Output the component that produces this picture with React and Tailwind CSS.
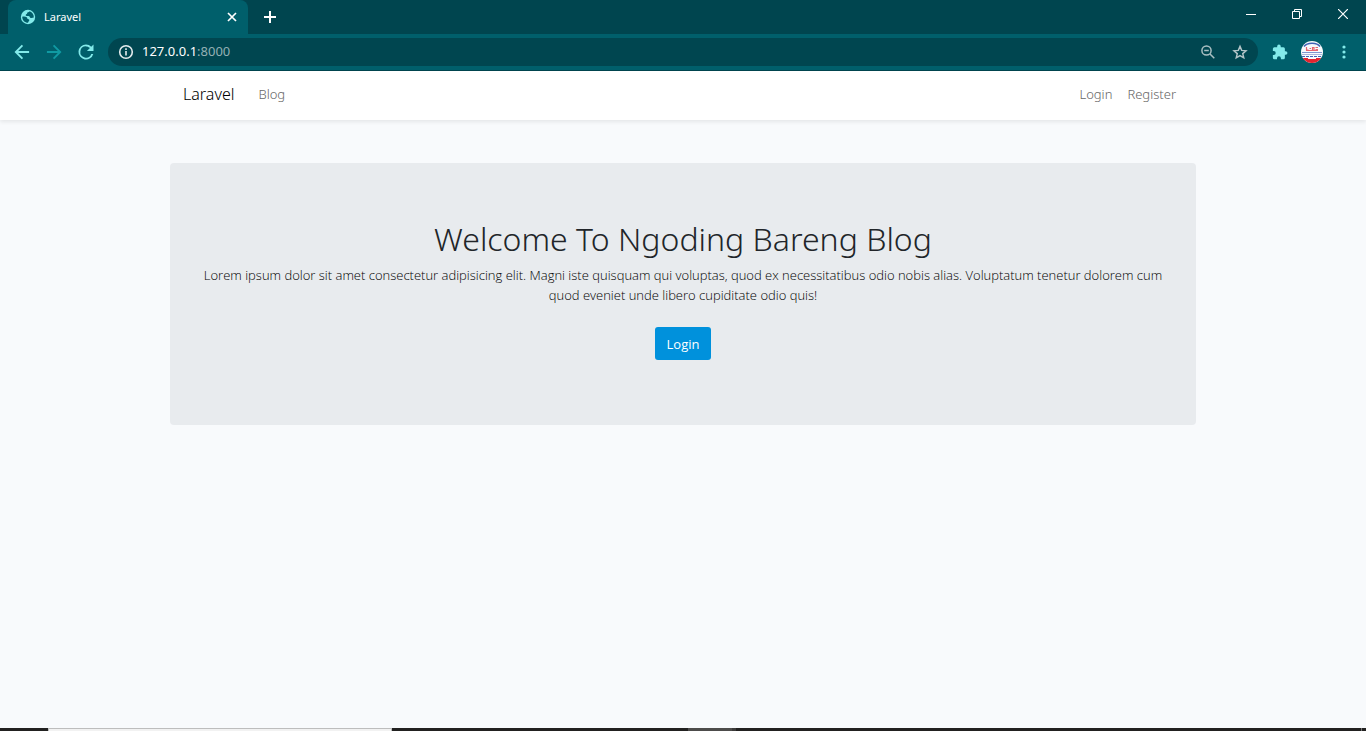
import React from "react";

const page = "font-['Noto_Sans','Open_Sans',sans-serif] font-light";

function GlobeIcon() {
  return (
    <svg width="16" height="16" viewBox="0 0 16 16" aria-hidden="true">
      <circle cx="8" cy="8" r="7.2" fill="#83eaea" />
      <path
        d="M2.200 7.800c1.400-.4 3.500-.3 4.500.4.900.7.200 1.400 1.200 1.800 1 .4 1.500.3 1.400 1.200-.1.900-1 1.200-1.300 2.600C4.800 13.800 2.300 11.500 2.200 7.800zM9.600 2.300c-.2.900-1.400.9-2.100 1.300-.6.400-.1 1.100-.8 1.500-.8.400-1.200.8-.9 1.500.4.800 1.700.2 2.800.4 1.200.2 1 1.500 2 1.900 1 .3 2.100.1 3.200-.3C14 5.700 12.400 3.200 9.600 2.300z"
        fill="#005f6b"
      />
    </svg>
  );
}

function BackIcon() {
  return (
    <svg width="20" height="20" viewBox="0 0 24 24" fill="currentColor" aria-hidden="true">
      <path d="M20.500 10.800H7.400l5.900-5.900-1.600-1.600L3 12l8.700 8.700 1.600-1.600-5.900-5.900h13.100z" />
    </svg>
  );
}

function ReloadIcon() {
  return (
    <svg width="20" height="20" viewBox="0 0 24 24" fill="currentColor" aria-hidden="true">
      <path d="M18.300 5.700A8.900 8.900 0 0 0 12 3a9 9 0 1 0 8.700 11.300h-2.400A6.750 6.750 0 1 1 12 5.250c1.860 0 3.530.77 4.740 1.990L13.100 10.900H21V3z" />
    </svg>
  );
}

function InfoIcon() {
  return (
    <svg width="16" height="16" viewBox="0 0 16 16" fill="none" stroke="#e4ecee" strokeWidth="1.600" aria-hidden="true">
      <circle cx="8" cy="8" r="6.300" />
      <path d="M8 7v4.500M8 4.300v1.600" />
    </svg>
  );
}

function ZoomOutIcon() {
  return (
    <svg width="16" height="16" viewBox="0 0 16 16" fill="none" stroke="#a9bfc2" strokeWidth="1.500" aria-hidden="true">
      <circle cx="6.500" cy="6.500" r="4.600" />
      <path d="M10 10l4.300 4.300M4.200 6.500h4.600" />
    </svg>
  );
}

function StarIcon() {
  return (
    <svg width="16" height="16" viewBox="0 0 24 24" fill="none" stroke="#b4c5c8" strokeWidth="2.200" aria-hidden="true">
      <path d="M12 3.600l2.500 6 6.500.5-4.900 4.300 1.500 6.300L12 17.300l-5.600 3.400 1.500-6.300L3 10.100l6.500-.5z" />
    </svg>
  );
}

function PuzzleIcon() {
  return (
    <svg width="18" height="18" viewBox="0 0 24 24" fill="#83eaea" aria-hidden="true">
      <path d="M19.500 11H18.500V7.500a2 2 0 0 0-2-2H13V4.500a2.400 2.400 0 0 0-4.800 0v1H4.500a2 2 0 0 0-2 2v3.300h1.200a2.600 2.600 0 0 1 0 5.200H2.500v3.500a2 2 0 0 0 2 2H8v-1.200a2.600 2.600 0 0 1 5.200 0v1.200h3.300a2 2 0 0 0 2-2v-3.700h1a2.400 2.400 0 0 0 0-4.800z" />
    </svg>
  );
}

function Avatar() {
  return (
    <svg width="22" height="22" viewBox="0 0 22 22" aria-hidden="true">
      <defs>
        <clipPath id="avatar-clip">
          <circle cx="11" cy="11" r="11" />
        </clipPath>
      </defs>
      <g clipPath="url(#avatar-clip)">
        <path d="M0 0h22v22H0z" fill="#f7fafc" />
        <path d="M3 5.500C6 1.200 16 1.200 19 5.500" fill="none" stroke="#3f62b5" strokeWidth="1.400" />
        <path d="M5.500 6v3h2M8.500 7.500h1.500M11.500 9V6.500h1.500V9M14.500 6.500h2.500M14.500 8.500h2.500M5 9.500h12" fill="none" stroke="#e56570" strokeWidth="1.200" />
        <path d="M1 11.500h20" stroke="#7d95cf" strokeWidth="1.200" />
        <path d="M1 13.500h20" stroke="#a9b7dc" strokeWidth="1" />
        <path d="M1 15.500h20" stroke="#3f62b5" strokeWidth="1.200" strokeDasharray="3 1" />
        <path d="M0 17h7v1h8v-1h7v2l-5 1-1 2H6l-1-2-5-1z" fill="#e3242f" />
      </g>
    </svg>
  );
}

function TitleBar() {
  return (
    <div className="flex h-[34px] justify-between bg-[#00454f] pl-2">
      <div className="flex items-stretch">
        <div className="flex w-60 items-center rounded-t-lg bg-[#005f6b] pr-2 pl-3 text-white">
          <GlobeIcon />
          <span className="ml-2 flex-1 text-[11px]">Laravel</span>
          <button aria-label="Close tab" className="flex size-4 items-center justify-center">
            <svg width="10" height="10" viewBox="0 0 10 10" stroke="#fff" strokeWidth="1.700">
              <path d="M1 1l8 8M9 1L1 9" />
            </svg>
          </button>
        </div>
        <button aria-label="New tab" className="ml-3 flex w-5 items-center justify-center">
          <svg width="12" height="12" viewBox="0 0 12 12" stroke="#fff" strokeWidth="2">
            <path d="M6 0v12M0 6h12" />
          </svg>
        </button>
      </div>
      <div className="flex h-7 text-white">
        <button aria-label="Minimize" className="flex w-[46px] items-center justify-center">
          <svg width="10" height="10" viewBox="0 0 10 10" stroke="#fff">
            <path d="M0 5.500h10" />
          </svg>
        </button>
        <button aria-label="Restore" className="flex w-[46px] items-center justify-center">
          <svg width="10" height="10" viewBox="0 0 10 10" fill="none" stroke="#fff">
            <path d="M.5 2.500h7v7h-7zM2.500 2.500v-2h7v7h-2" />
          </svg>
        </button>
        <button aria-label="Close window" className="flex w-[46px] items-center justify-center">
          <svg width="10" height="10" viewBox="0 0 10 10" stroke="#fff" strokeWidth="1.200">
            <path d="M0 0l10 10M10 0L0 10" />
          </svg>
        </button>
      </div>
    </div>
  );
}

function Toolbar() {
  return (
    <div className="flex h-[37px] items-center border-b border-[#00454f] bg-[#005f6b] pr-[13px] pl-3 text-[#83eaea]">
      <div className="flex gap-3">
        <button aria-label="Back"><BackIcon /></button>
        <button aria-label="Forward" className="rotate-180 text-[#109aa3]"><BackIcon /></button>
        <button aria-label="Reload"><ReloadIcon /></button>
      </div>
      <div className="ml-3 flex h-7 flex-1 items-center rounded-full bg-[#004650] px-[10px]">
        <InfoIcon />
        <span className="ml-2 flex-1 text-[13px] text-white">
          127.0.0.1<span className="text-[#94b0b4]">:8000</span>
        </span>
        <div className="flex gap-4">
          <button aria-label="Zoom"><ZoomOutIcon /></button>
          <button aria-label="Bookmark this page"><StarIcon /></button>
        </div>
      </div>
      <div className="ml-[13px] flex items-center gap-3">
        <button aria-label="Extensions"><PuzzleIcon /></button>
        <button aria-label="Profile"><Avatar /></button>
        <button aria-label="Menu" className="flex w-[18px] justify-center">
          <svg width="4" height="14" viewBox="0 0 4 14" fill="#83eaea">
            <circle cx="2" cy="2" r="1.600" />
            <circle cx="2" cy="7" r="1.600" />
            <circle cx="2" cy="12" r="1.600" />
          </svg>
        </button>
      </div>
    </div>
  );
}

function Navbar() {
  return (
    <nav className="bg-white shadow-[0_2px_4px_rgba(0,0,0,0.08)]">
      <div className="mx-auto flex h-[49px] max-w-[1026px] items-center px-[13px] pb-[3px]">
        <a href="#" className="text-[16px] leading-6 text-black">Laravel</a>
        <a href="#blog" className="ml-6 text-[13px] leading-5 text-[#666]">Blog</a>
        <div className="ml-auto flex gap-[15px] pr-[7px] text-[13px] leading-5 text-[#666]">
          <a href="#login">Login</a>
          <a href="#register">Register</a>
        </div>
      </div>
    </nav>
  );
}

function Taskbar() {
  return (
    <div className="flex h-[3px] bg-[#222120]">
      <div className="ml-12 w-[344px] border-x border-t border-[#bdbdbd] bg-[#f2f2f2]" />
      <div className="ml-[296px] w-11 bg-[#4d4c4b]" />
      <div className="w-1 bg-[#3c3b3a]" />
      <div className="mr-1 ml-auto w-px bg-[#777]" />
    </div>
  );
}

export default function App() {
  return (
    <div className="flex min-h-screen flex-col bg-[#f8fafc]">
      <header className="font-['Noto_Sans','Open_Sans',sans-serif]">
        <TitleBar />
        <Toolbar />
      </header>
      <div className={`flex flex-1 flex-col ${page}`}>
        <Navbar />
        <main className="mx-auto mt-[43px] w-full max-w-[1026px]">
          <section className="rounded bg-[#e8ebee] px-7 pt-14 pb-[65px] text-center text-[#212529]">
            <h1 className="text-[32px] leading-10">Welcome To Ngoding Bareng Blog</h1>
            <p className="mt-[6px] font-['Open_Sans',sans-serif] text-[13px] leading-5 text-black">
              Lorem ipsum dolor sit amet consectetur adipisicing elit. Magni iste quisquam qui voluptas, quod ex
              necessitatibus odio nobis alias. Voluptatum tenetur dolorem cum quod eveniet unde libero cupiditate odio
              quis!
            </p>
            <button className="mt-[22px] h-[33px] rounded-[3px] bg-[#0091dc] px-3 font-['Open_Sans',sans-serif] text-[13px] leading-5 font-normal text-white">
              Login
            </button>
          </section>
        </main>
      </div>
      <Taskbar />
    </div>
  );
}
